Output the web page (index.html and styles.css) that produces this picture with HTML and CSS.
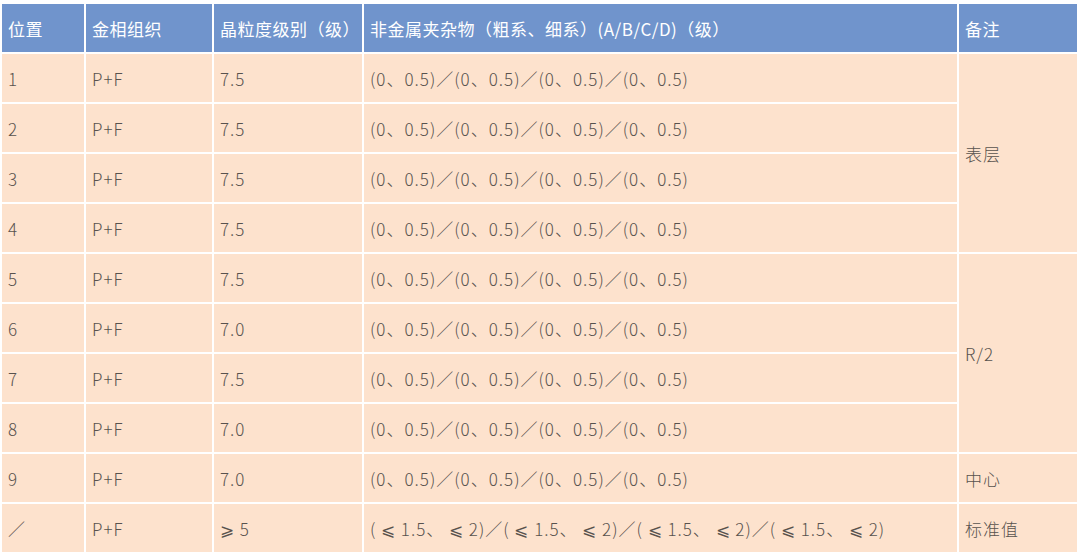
FILE: index.html
```html
<!DOCTYPE html>
<html lang="zh-CN">
<head>
<meta charset="utf-8">
<title>金相检测结果</title>
<link rel="stylesheet" href="styles.css">
</head>
<body>
<table class="grid">
  <colgroup>
    <col class="c1"><col class="c2"><col class="c3"><col class="c4"><col class="c5">
  </colgroup>
  <thead>
    <tr>
      <th>位置</th>
      <th>金相组织</th>
      <th>晶粒度级别（级）</th>
      <th>非金属夹杂物（粗系、细系）(A/B/C/D)（级）</th>
      <th>备注</th>
    </tr>
  </thead>
  <tbody>
    <tr><td>1</td><td>P+F</td><td>7.5</td><td>(0、0.5)／(0、0.5)／(0、0.5)／(0、0.5)</td><td rowspan="4">表层</td></tr>
    <tr><td>2</td><td>P+F</td><td>7.5</td><td>(0、0.5)／(0、0.5)／(0、0.5)／(0、0.5)</td></tr>
    <tr><td>3</td><td>P+F</td><td>7.5</td><td>(0、0.5)／(0、0.5)／(0、0.5)／(0、0.5)</td></tr>
    <tr><td>4</td><td>P+F</td><td>7.5</td><td>(0、0.5)／(0、0.5)／(0、0.5)／(0、0.5)</td></tr>
    <tr><td>5</td><td>P+F</td><td>7.5</td><td>(0、0.5)／(0、0.5)／(0、0.5)／(0、0.5)</td><td rowspan="4">R/2</td></tr>
    <tr><td>6</td><td>P+F</td><td>7.0</td><td>(0、0.5)／(0、0.5)／(0、0.5)／(0、0.5)</td></tr>
    <tr><td>7</td><td>P+F</td><td>7.5</td><td>(0、0.5)／(0、0.5)／(0、0.5)／(0、0.5)</td></tr>
    <tr><td>8</td><td>P+F</td><td>7.0</td><td>(0、0.5)／(0、0.5)／(0、0.5)／(0、0.5)</td></tr>
    <tr><td>9</td><td>P+F</td><td>7.0</td><td>(0、0.5)／(0、0.5)／(0、0.5)／(0、0.5)</td><td>中心</td></tr>
    <tr><td>／</td><td>P+F</td><td>⩾ 5</td><td>( ⩽ 1.5、 ⩽ 2)／( ⩽ 1.5、 ⩽ 2)／( ⩽ 1.5、 ⩽ 2)／( ⩽ 1.5、 ⩽ 2)</td><td>标准值</td></tr>
  </tbody>
</table>
</body>
</html>
```
FILE: styles.css
```css
html, body {
  margin: 0;
  padding: 0;
  background: #ffffff;
}
body {
  padding-top: 2px;
  font-family: "Noto Sans CJK SC", "Noto Sans", sans-serif;
}
.grid {
  table-layout: fixed;
  border-collapse: separate;
  border-spacing: 2px;
  width: 1079px;
}
.c1 { width: 82px; }
.c2 { width: 126px; }
.c3 { width: 148px; }
.c4 { width: 593px; }
.c5 { width: 118px; }
.grid th,
.grid td {
  padding: 0 0 0 6px;
  text-align: left;
  white-space: nowrap;
  overflow: hidden;
}
.grid th {
  height: 48px;
  background: #7094cc;
  color: #ffffff;
  font-size: 17px;
  font-weight: 400;
  letter-spacing: 0.5px;
}
.grid td {
  height: 48px;
  background: #fde2cd;
  color: #58524e;
  font-size: 17px;
  font-weight: 300;
  letter-spacing: 1px;
}
```
